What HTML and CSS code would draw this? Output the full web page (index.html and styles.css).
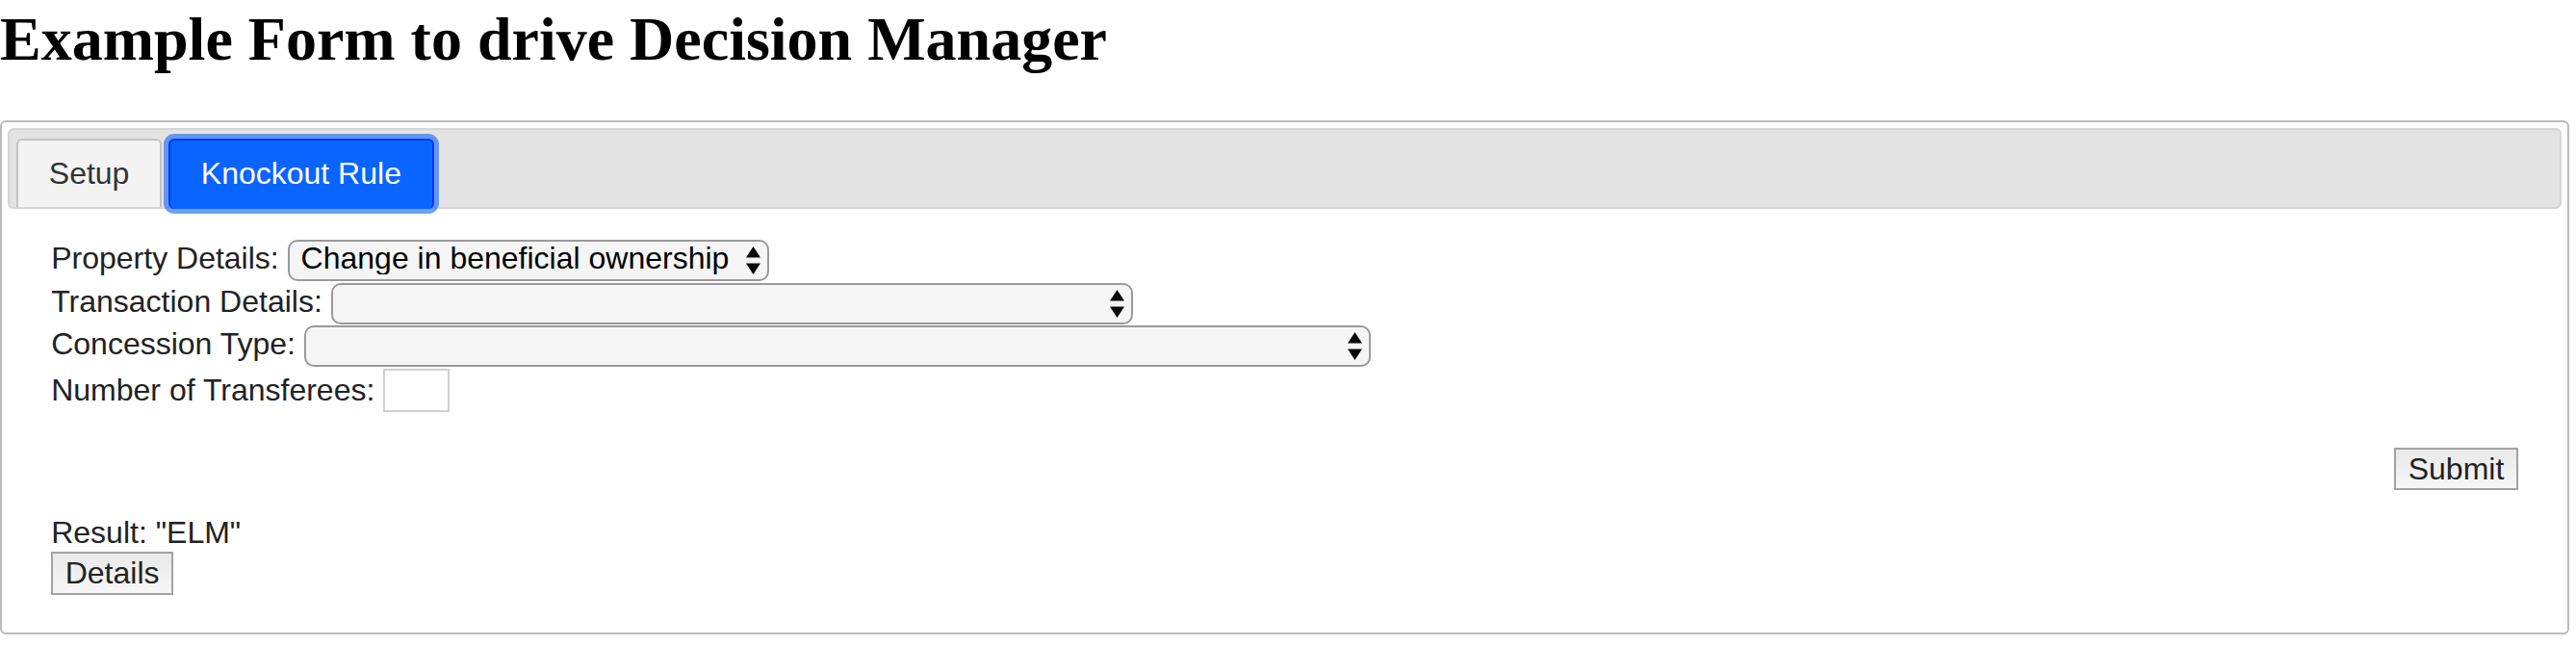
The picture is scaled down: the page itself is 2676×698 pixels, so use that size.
FILE: index.html
```html
<!DOCTYPE html>
<html lang="en">
<head>
<meta charset="utf-8">
<title>Example Form to drive Decision Manager</title>
<link rel="stylesheet" href="styles.css">
</head>
<body>
<h1 class="title">Example Form to drive Decision Manager</h1>
<div class="tabs">
  <ul class="tab-nav">
    <li class="tab"><a class="tab-link">Setup</a></li>
    <li class="tab tab-active"><a class="tab-link">Knockout Rule</a></li>
  </ul>
  <div class="panel">
    <div class="fields">
      <div class="row">
        <label class="label">Property Details:</label>
        <span class="select-wrap">
          <select class="select select-property"><option>Change in beneficial ownership</option></select>
          <svg class="arrows" viewBox="0 0 15 29" width="15" height="29"><polygon points="0,11.5 7.5,0 15,11.5"/><polygon points="0,17.5 15,17.5 7.5,29"/></svg>
        </span>
      </div>
      <div class="row">
        <label class="label">Transaction Details:</label>
        <span class="select-wrap">
          <select class="select select-transaction"><option></option></select>
          <svg class="arrows" viewBox="0 0 15 29" width="15" height="29"><polygon points="0,11.5 7.5,0 15,11.5"/><polygon points="0,17.5 15,17.5 7.5,29"/></svg>
        </span>
      </div>
      <div class="row">
        <label class="label">Concession Type:</label>
        <span class="select-wrap">
          <select class="select select-concession"><option></option></select>
          <svg class="arrows" viewBox="0 0 15 29" width="15" height="29"><polygon points="0,11.5 7.5,0 15,11.5"/><polygon points="0,17.5 15,17.5 7.5,29"/></svg>
        </span>
      </div>
      <div class="row">
        <label class="label">Number of Transferees:</label>
        <input class="number" type="text" value="">
      </div>
    </div>
    <div class="actions"><button class="btn" type="button">Submit</button></div>
    <div class="result">Result: "ELM"</div>
    <div class="details"><button class="btn" type="button">Details</button></div>
  </div>
</div>
</body>
</html>
```

FILE: styles.css
```css
html, body {
  margin: 0;
  padding: 0;
  background: #ffffff;
}

body {
  font-family: "Liberation Sans", Arial, sans-serif;
  font-size: 32px;
  color: #222222;
}

.title {
  font-family: "Liberation Serif", "Times New Roman", serif;
  font-size: 64px;
  font-weight: bold;
  color: #000000;
  margin: 4px 0 47px;
  line-height: normal;
}

.tabs {
  margin-right: 7px;
  border: 2px solid #bababa;
  border-radius: 6px;
  padding: 6.4px;
}

.tab-nav {
  list-style: none;
  margin: 0;
  padding: 6.4px 6.4px 0;
  display: flex;
  align-items: flex-start;
  background: #e3e3e3;
  border: 2px solid #d5d5d5;
  border-radius: 6px;
}

.tab {
  margin: 2px 6.4px 0 0;
  border: 2px solid #c3c3c3;
  border-bottom: 0;
  border-radius: 6px 6px 0 0;
  background: #f3f3f3;
}

.tab-link {
  display: block;
  padding: 16px 32px;
  line-height: 36.8px;
  color: #333333;
  text-decoration: none;
  white-space: nowrap;
}

.tab-active {
  background: #0a64ff;
  border-color: #0038f8;
  border-radius: 6px;
  margin-bottom: -2px;
  padding-bottom: 2px;
  box-shadow: 0 0 0 5px rgba(22, 104, 246, 0.62);
}

.tab-active .tab-link {
  color: #ffffff;
}

.panel {
  padding: 32.6px 44.8px 32px;
}

.fields {
  display: flex;
  flex-direction: column;
  align-items: flex-start;
  gap: 1.5px;
}

.row {
  display: flex;
  align-items: baseline;
  gap: 8.9px;
}

.label {
  line-height: 36.8px;
  color: #222222;
  white-space: nowrap;
}

.select-wrap {
  position: relative;
  display: inline-flex;
}

.select {
  -webkit-appearance: none;
  appearance: none;
  box-sizing: border-box;
  height: 43px;
  margin: 0;
  padding: 0 28px 5px 12px;
  border: 2px solid #9a9a9a;
  border-radius: 10px;
  background: #f5f5f5;
  font-family: "Liberation Sans", Arial, sans-serif;
  font-size: 32px;
  line-height: 34px;
  color: #000000;
}

.select-property {
  width: 500px;
}

.select-transaction {
  width: 833px;
}

.select-concession {
  width: 1108px;
}

.arrows {
  position: absolute;
  right: 9px;
  top: 50%;
  margin-top: -14.5px;
  fill: #0a0a0a;
  pointer-events: none;
}

.number {
  box-sizing: border-box;
  width: 69px;
  height: 45px;
  margin: 0;
  padding: 0 4px;
  border: 2px solid #d0d0d0;
  background: #ffffff;
  font-family: "Liberation Sans", Arial, sans-serif;
  font-size: 32px;
}

.actions {
  display: flex;
  justify-content: flex-end;
  margin-top: 37px;
}

.btn {
  margin: 0;
  padding: 2px 12.5px;
  border: 2px solid #a2a2a2;
  border-radius: 0;
  background: linear-gradient(#e9e9e9, #f6f6f6);
  font-family: "Liberation Sans", Arial, sans-serif;
  font-size: 32px;
  line-height: 36.8px;
  color: #222222;
}

.result {
  margin-top: 25.5px;
  line-height: 36.8px;
}

.details {
  margin-top: 1.7px;
}
```
